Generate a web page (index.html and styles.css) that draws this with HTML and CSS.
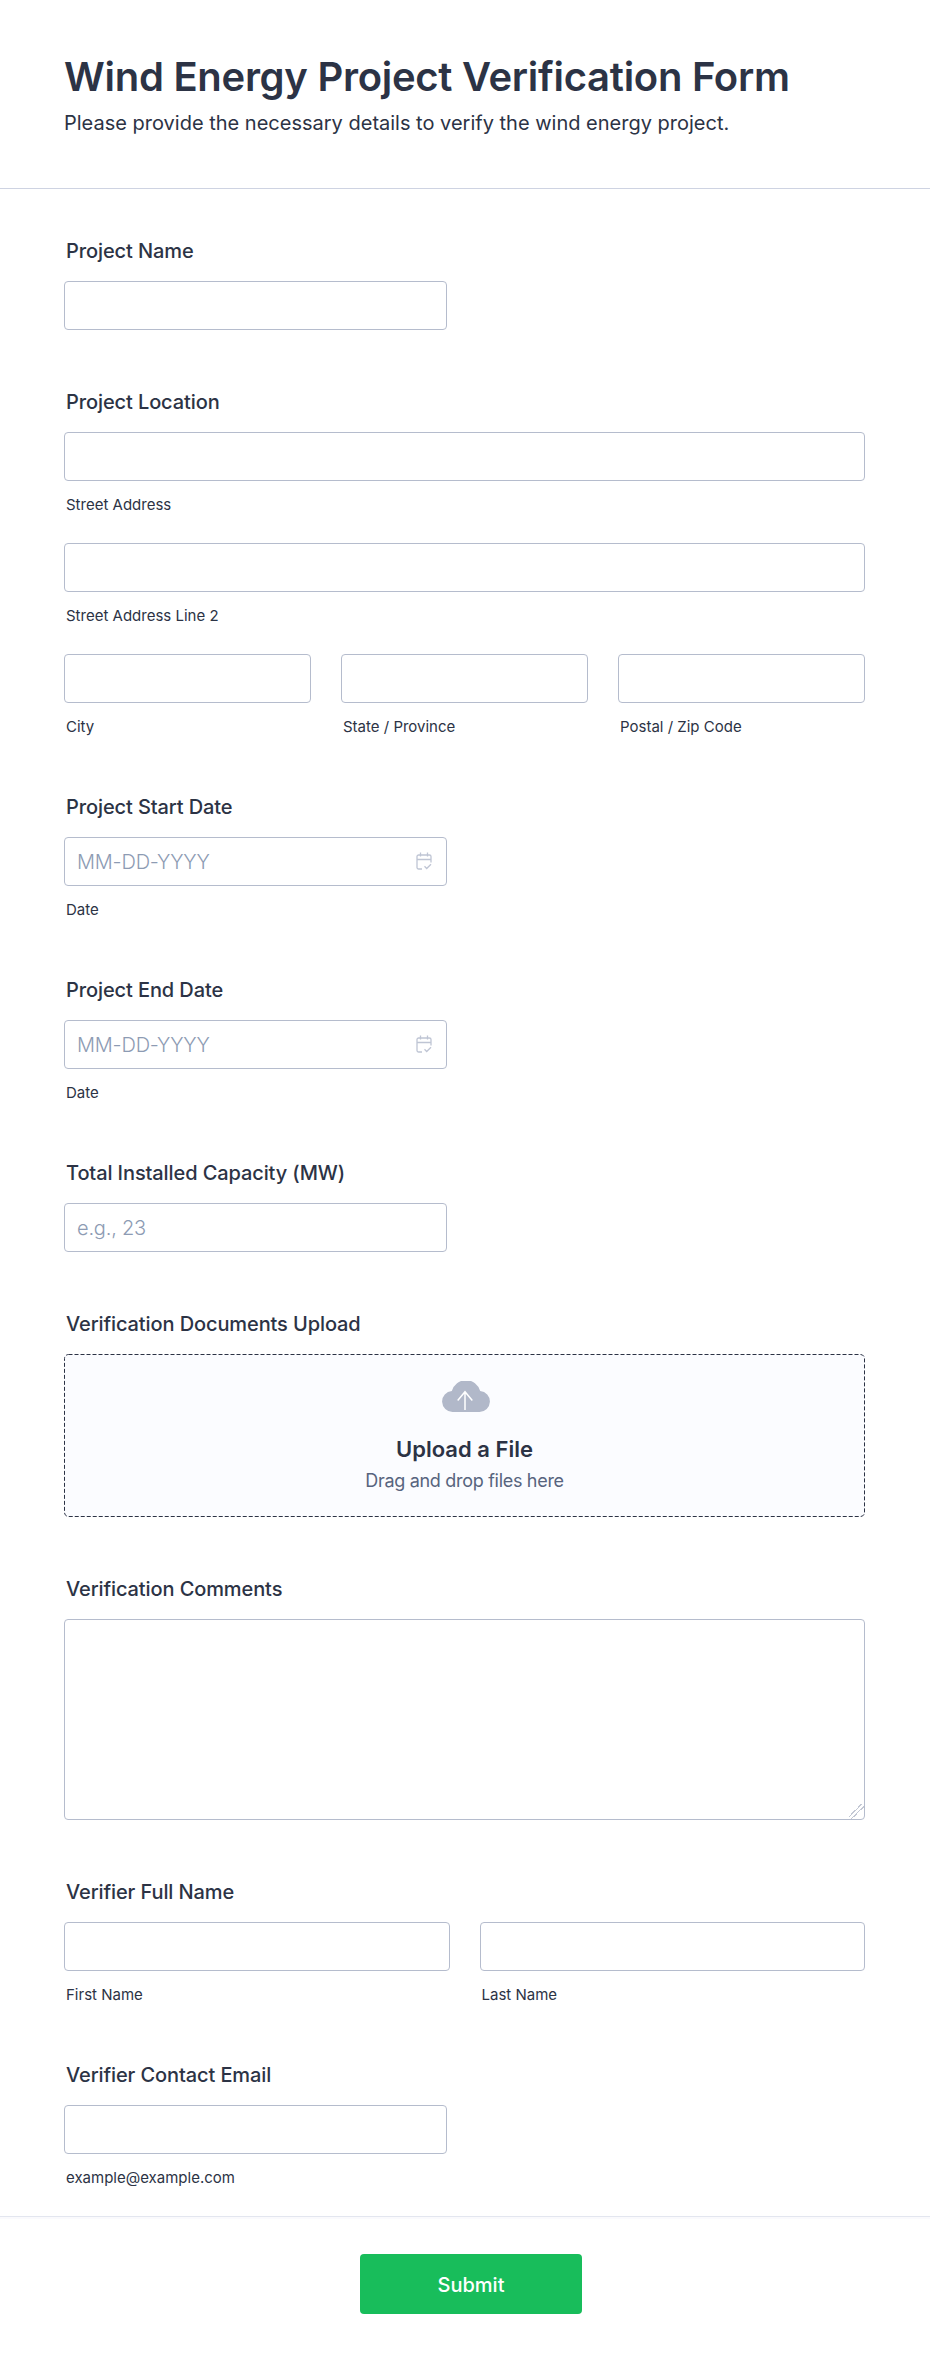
FILE: index.html
```html
<!DOCTYPE html>
<html lang="en">
<head>
    <meta charset="utf-8" />
    <title>Wind Energy Project Verification Form</title>
    <meta name="viewport" content="width=device-width, initial-scale=1.0">
    <link rel="stylesheet" href="styles.css">
</head>
<body>

<form class="form">
    <header class="form-header">
        <h1>Wind Energy Project Verification Form</h1>
        <p>Please provide the necessary details to verify the wind energy project.</p>
    </header>

    <div class="form-body">
        <div class="field">
            <label class="field-label">Project Name</label>
            <input class="input input-short" type="text">
        </div>

        <div class="field">
            <label class="field-label">Project Location</label>
            <div class="stack">
                <div>
                    <input class="input" type="text">
                    <span class="sublabel">Street Address</span>
                </div>
                <div>
                    <input class="input" type="text">
                    <span class="sublabel">Street Address Line 2</span>
                </div>
                <div class="row row-3">
                    <div>
                        <input class="input" type="text">
                        <span class="sublabel">City</span>
                    </div>
                    <div>
                        <input class="input" type="text">
                        <span class="sublabel">State / Province</span>
                    </div>
                    <div>
                        <input class="input" type="text">
                        <span class="sublabel">Postal / Zip Code</span>
                    </div>
                </div>
            </div>
        </div>

        <div class="field">
            <label class="field-label">Project Start Date</label>
            <div class="date-wrap">
                <input class="input" type="text" placeholder="MM-DD-YYYY">
                <svg class="date-icon" viewBox="0 0 16 18" fill="none" stroke="#bfc5d4" stroke-width="1.3">
                    <path d="M6 17H2.600A1.600 1.600 0 0 1 1 15.400V4.600A1.600 1.600 0 0 1 2.600 3h10.800A1.600 1.600 0 0 1 15 4.600v5.900"/>
                    <path d="M1 7.500h14M4.500 .5v4M11.500 .5v4"/>
                    <path d="M8.500 14.300l2.200 2.200 4.300-4.300"/>
                </svg>
            </div>
            <span class="sublabel">Date</span>
        </div>

        <div class="field">
            <label class="field-label">Project End Date</label>
            <div class="date-wrap">
                <input class="input" type="text" placeholder="MM-DD-YYYY">
                <svg class="date-icon" viewBox="0 0 16 18" fill="none" stroke="#bfc5d4" stroke-width="1.3">
                    <path d="M6 17H2.600A1.600 1.600 0 0 1 1 15.400V4.600A1.600 1.600 0 0 1 2.600 3h10.800A1.600 1.600 0 0 1 15 4.600v5.900"/>
                    <path d="M1 7.500h14M4.500 .5v4M11.500 .5v4"/>
                    <path d="M8.500 14.300l2.200 2.200 4.300-4.300"/>
                </svg>
            </div>
            <span class="sublabel">Date</span>
        </div>

        <div class="field">
            <label class="field-label">Total Installed Capacity (MW)</label>
            <input class="input input-short" type="text" placeholder="e.g., 23">
        </div>

        <div class="field">
            <label class="field-label">Verification Documents Upload</label>
            <div class="upload">
                <svg class="upload-border" viewBox="0 0 801 163">
                    <rect x=".5" y=".5" width="800" height="162" rx="4" fill="none" stroke="#2c3345" stroke-dasharray="4 2"/>
                </svg>
                <svg class="upload-icon" viewBox="0 0 48 31">
                    <path fill="#b1b8c9" d="M10.500 31A10.500 10.500 0 0 1 9.800 10.030A14.700 14.700 0 0 1 38.200 10.030A10.500 10.500 0 0 1 37.500 31Z"/>
                    <path fill="none" stroke="#fff" stroke-width="1.500" d="M23 29V10.700M15.700 19.400L23 10.700l7.300 8.700"/>
                </svg>
                <div class="upload-title">Upload a File</div>
                <div class="upload-sub">Drag and drop files here</div>
            </div>
        </div>

        <div class="field">
            <label class="field-label">Verification Comments</label>
            <textarea class="input textarea"></textarea>
        </div>

        <div class="field">
            <label class="field-label">Verifier Full Name</label>
            <div class="row row-2">
                <div>
                    <input class="input" type="text">
                    <span class="sublabel">First Name</span>
                </div>
                <div>
                    <input class="input" type="text">
                    <span class="sublabel">Last Name</span>
                </div>
            </div>
        </div>

        <div class="field">
            <label class="field-label">Verifier Contact Email</label>
            <input class="input input-short" type="text">
            <span class="sublabel">example@example.com</span>
        </div>
    </div>

    <footer class="form-footer">
        <button class="submit" type="button">Submit</button>
    </footer>
</form>

</body>
</html>
```

FILE: styles.css
```css
* {
    margin: 0;
    padding: 0;
    box-sizing: border-box;
}

body {
    font-family: Inter, "Liberation Sans", sans-serif;
    background-color: #fff;
    color: #2c3345;
}

.form {
    width: 930px;
}

.form-header {
    height: 189px;
    padding: 52px 64px 0;
    border-bottom: 1px solid #ced3e2;
}

.form-header h1 {
    font-size: 40px;
    line-height: 50px;
    font-weight: 600;
    letter-spacing: -0.28px;
}

.form-header p {
    font-size: 20px;
    line-height: 28px;
    margin-top: 7px;
}

.form-body {
    padding: 50px 65px 30px 64px;
}

.field {
    margin-bottom: 60px;
}

.field:last-child {
    margin-bottom: 0;
}

.field-label {
    display: block;
    padding-left: 2px;
    font-size: 20px;
    line-height: 25px;
    font-weight: 500;
    letter-spacing: -0.1px;
    margin-bottom: 17px;
}

.input {
    display: block;
    width: 100%;
    height: 49px;
    border: 1px solid #b5bccd;
    border-radius: 4px;
    background: #fff;
    padding: 0 12px;
    font-family: inherit;
    font-size: 20px;
    color: #2c3345;
}

.input::placeholder {
    color: #8d9bb3;
    font-weight: 300;
    letter-spacing: -0.2px;
    opacity: 1;
}

.input-short {
    width: 383px;
}

.textarea {
    height: 201px;
}

.textarea::-webkit-resizer {
    background: linear-gradient(135deg, transparent 40%, #c3c8d4 40% 46%, transparent 46% 54%, #c3c8d4 54% 60%, transparent 60%);
}

.sublabel {
    display: block;
    padding-left: 2px;
    margin-top: 16px;
    font-size: 15px;
    line-height: 16px;
}

.stack {
    display: flex;
    flex-direction: column;
    gap: 30px;
}

.row {
    display: grid;
    gap: 30px;
}

.row-3 {
    grid-template-columns: repeat(3, 1fr);
}

.row-2 {
    grid-template-columns: repeat(2, 1fr);
}

.date-wrap {
    position: relative;
    width: 383px;
}

.date-icon {
    position: absolute;
    top: 15px;
    right: 15px;
    width: 16px;
    height: 18px;
}

.upload {
    position: relative;
    height: 163px;
    border-radius: 4px;
    background: #fbfcff;
    padding-top: 27px;
    text-align: center;
}

.upload-border {
    position: absolute;
    top: 0;
    left: 0;
    width: 100%;
    height: 100%;
}

.upload-icon {
    display: block;
    width: 48px;
    height: 31px;
    margin-left: 378px;
}

.upload-title {
    margin-top: 23px;
    font-size: 22px;
    line-height: 28px;
    font-weight: 600;
}

.upload-sub {
    margin-top: 6px;
    font-size: 18px;
    line-height: 24px;
    letter-spacing: -0.3px;
    color: #57647e;
}

.form-footer {
    height: 147px;
    border-top: 1px solid #e3e6ef;
    box-shadow: inset 0 2px 0 #fafafd;
    padding: 37px 0 0 12px;
    display: flex;
    justify-content: center;
    align-items: flex-start;
}

.submit {
    width: 222px;
    height: 60px;
    padding-top: 1px;
    border: 0;
    border-radius: 4px;
    background-color: #18bd5b;
    color: #fff;
    font-family: inherit;
    font-size: 20px;
    font-weight: 500;
}
```
